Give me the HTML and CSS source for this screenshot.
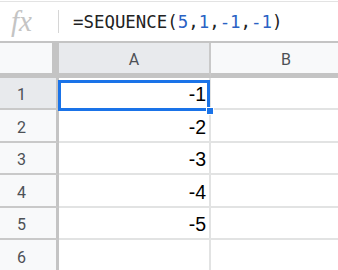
FILE: index.html
```
<!DOCTYPE html>
<html lang="en">
  <head>
    <meta charset="utf-8" />
    <title>SEQUENCE</title>
    <link rel="stylesheet" href="styles.css">
  </head>
  <body>
    <div class="formula-bar">
      <div class="fx">fx</div>
      <div class="sep"></div>
      <div class="formula">=SEQUENCE(<span class="arg">5</span>,<span class="arg">1</span>,<span class="arg">-1</span>,<span class="arg">-1</span>)</div>
    </div>

    <div class="sheet">
      <div class="row head">
        <div class="corner"></div>
        <div class="ch selected">A</div>
        <div class="ch">B</div>
      </div>
      <div class="row r32">
        <div class="rh selected">1</div>
        <div class="cell num active">-1
          <div class="selection"></div>
          <div class="handle"></div>
        </div>
        <div class="cell"></div>
      </div>
      <div class="row r33">
        <div class="rh">2</div>
        <div class="cell num">-2</div>
        <div class="cell"></div>
      </div>
      <div class="row r32">
        <div class="rh">3</div>
        <div class="cell num">-3</div>
        <div class="cell"></div>
      </div>
      <div class="row r33">
        <div class="rh">4</div>
        <div class="cell num">-4</div>
        <div class="cell"></div>
      </div>
      <div class="row r32">
        <div class="rh">5</div>
        <div class="cell num">-5</div>
        <div class="cell"></div>
      </div>
      <div class="row r33">
        <div class="rh">6</div>
        <div class="cell"></div>
        <div class="cell"></div>
      </div>
    </div>
  </body>
</html>
```

FILE: styles.css
```
* {
  box-sizing: border-box;
}
body {
  margin: 0;
  width: 338px;
  height: 270px;
  overflow: hidden;
  background: #fff;
  font-family: Arial, "Liberation Sans", sans-serif;
}
.formula-bar {
  display: flex;
  align-items: center;
  height: 42px;
  margin-top: 1px;
  border-top: 1px solid #e3e3e3;
  border-bottom: 2px solid #c4c4c4;
}
.fx {
  width: 58px;
  padding-left: 11px;
  font-family: "Liberation Serif", serif;
  font-style: italic;
  font-size: 29px;
  line-height: 1;
  color: #c4c4c4;
}
.sep {
  width: 1px;
  height: 23px;
  background: #d6d6d6;
}
.formula {
  margin-left: 14px;
  font-family: "DejaVu Sans Mono", monospace;
  font-size: 17.4px;
  color: #222;
  white-space: nowrap;
}
.arg {
  color: #2a62c4;
}
.sheet {
  width: 338px;
  overflow: hidden;
}
.row {
  display: flex;
}
.head {
  height: 35px;
}
.r32 {
  height: 32px;
}
.r33 {
  height: 33px;
}
.corner {
  width: 59px;
  flex: none;
  background: #f8f9fa;
  border-right: 7px solid #c4c4c4;
  border-bottom: 5px solid #c4c4c4;
}
.ch {
  width: 152px;
  flex: none;
  display: flex;
  align-items: center;
  justify-content: center;
  padding-top: 3px;
  background: #f8f9fa;
  border-right: 2px solid #c9c9c9;
  border-bottom: 5px solid #c4c4c4;
  font-family: Roboto, Arial, sans-serif;
  font-size: 16px;
  color: #4d5156;
}
.rh {
  width: 59px;
  flex: none;
  display: flex;
  align-items: center;
  justify-content: center;
  padding: 3px 13px 0 0;
  background: #f8f9fa;
  border-right: 3px solid #c4c4c4;
  border-bottom: 2px solid #c9c9c9;
  font-family: Roboto, Arial, sans-serif;
  font-size: 16px;
  color: #4d5156;
}
.selected {
  background: #e8eaed;
}
.cell {
  width: 152px;
  flex: none;
  display: flex;
  align-items: center;
  padding-top: 3px;
  border-right: 2px solid #e2e3e3;
  border-bottom: 2px solid #e2e3e3;
  font-size: 19.5px;
  color: #000;
}
.num {
  justify-content: flex-end;
  padding-right: 3px;
}
.active {
  position: relative;
}
.selection {
  position: absolute;
  top: 2px;
  left: -1px;
  right: -1px;
  bottom: -3px;
  border: 3px solid #1a73e8;
}
.handle {
  position: absolute;
  left: 147px;
  top: 29px;
  width: 8px;
  height: 8px;
  background: #1a73e8;
  border: 1px solid #fff;
}
```
